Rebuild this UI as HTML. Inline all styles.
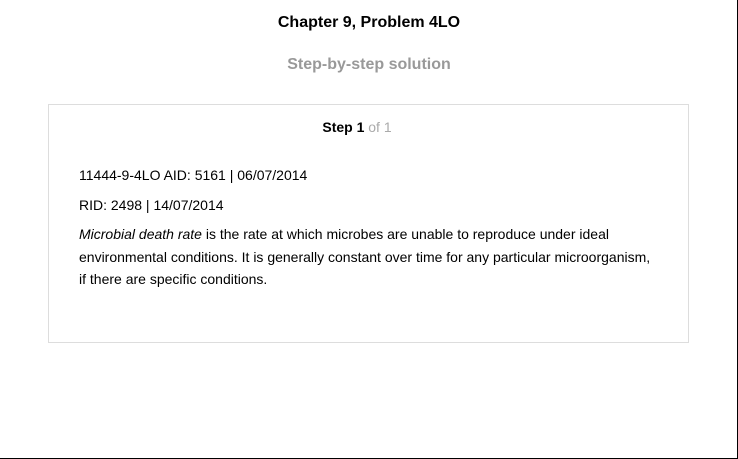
<!DOCTYPE html>
<html><head><style>
html,body{margin:0;padding:0;}
body{width:738px;height:459px;position:relative;background:#fff;font-family:"Liberation Sans",Arial,sans-serif;color:#000;overflow:hidden;}
.frame{position:absolute;left:0;top:0;width:737px;height:458px;border-right:1px solid #000;border-bottom:1px solid #000;box-sizing:content-box;}
.t{position:absolute;left:0;width:738px;text-align:center;font-weight:bold;}
.box{position:absolute;left:48px;top:104px;width:639px;height:237px;border:1px solid #ddd;}
.p{position:absolute;left:79px;font-size:14px;line-height:22.5px;width:580px;}
</style></head><body>
<div class="frame"></div>
<div class="t" style="top:14px;font-size:16px;">Chapter 9, Problem 4LO</div>
<div class="t" style="top:56px;font-size:16px;color:#999;">Step-by-step solution</div>
<div class="box"></div>
<div class="t" style="top:119px;font-size:14px;left:-12px;"><span>Step 1</span> <span style="color:#aaa;font-weight:normal">of 1</span></div>
<div class="p" style="top:164px;">11444-9-4LO AID: 5161 | 06/07/2014</div>
<div class="p" style="top:194px;">RID: 2498 | 14/07/2014</div>
<div class="p" style="top:223px;"><i>Microbial death rate</i> is the rate at which microbes are unable to reproduce under ideal environmental conditions. It is generally constant over time for any particular microorganism, if there are specific conditions.</div>
</body></html>
